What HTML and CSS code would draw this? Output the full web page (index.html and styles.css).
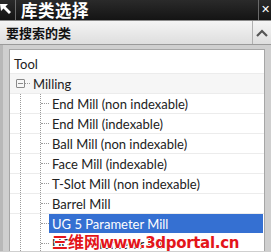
FILE: index.html
```html
<!DOCTYPE html>
<html lang="zh-CN">
<head>
  <meta charset="UTF-8" />
  <title>库类选择</title>
  <link rel="stylesheet" href="styles.css">
</head>
<body>
  <div class="titlebar">
    <span class="title-icon">
      <svg width="14" height="14" viewBox="0 0 14 14"><path d="M0 1 L8 1 L5.5 3.5 L11 9 L9 11 L3.5 5.5 L1 8 Z" fill="#fff"/></svg>
    </span>
    <span class="title">库类选择</span>
    <span class="close">✕</span>
  </div>

  <div class="section-head">
    <span class="section-label">要搜索的类</span>
    <span class="chevron">
      <svg width="12" height="8" viewBox="0 0 12 8"><path d="M1 7 L6 2 L11 7" fill="none" stroke="#555" stroke-width="2.2"/></svg>
    </span>
  </div>

  <div class="panel">
    <div class="tree">
      <div class="row root"><span class="label">Tool</span></div>
      <div class="row alt">
        <span class="expander"><span class="minus"></span></span>
        <span class="conn short"></span>
        <span class="label">Milling</span>
      </div>
      <div class="row"><span class="guide"></span><span class="guide wide"></span><span class="conn"></span><span class="label">End Mill (non indexable)</span></div>
      <div class="row"><span class="guide"></span><span class="guide wide"></span><span class="conn"></span><span class="label">End Mill (indexable)</span></div>
      <div class="row"><span class="guide"></span><span class="guide wide"></span><span class="conn"></span><span class="label">Ball Mill (non indexable)</span></div>
      <div class="row"><span class="guide"></span><span class="guide wide"></span><span class="conn"></span><span class="label">Face Mill (indexable)</span></div>
      <div class="row"><span class="guide"></span><span class="guide wide"></span><span class="conn"></span><span class="label">T-Slot Mill (non indexable)</span></div>
      <div class="row"><span class="guide"></span><span class="guide wide"></span><span class="conn"></span><span class="label">Barrel Mill</span></div>
      <div class="row selected"><span class="guide"></span><span class="guide wide"></span><span class="conn"></span><span class="label">UG 5 Parameter Mill</span></div>
      <div class="row"><span class="guide"></span><span class="guide wide"></span><span class="conn"></span><span class="label">UG 7 Parameter Mill</span></div>
    </div>
    <div class="watermark">三维网<span class="wm-url">www.3dportal.cn</span></div>
  </div>
</body>
</html>
```

FILE: styles.css
```css
body {
  margin: 0;
  width: 271px;
  height: 252px;
  overflow: hidden;
  background: #cfcfcf;
  font-family: "Lato", "Noto Sans", sans-serif;
}
.titlebar {
  height: 20px;
  display: flex;
  align-items: center;
  background: linear-gradient(#2a2a2a, #141414);
  color: #fff;
  border-bottom: 1px solid #8a8a8a;
}
.title-icon {
  width: 15px;
  height: 20px;
  display: flex;
  align-items: center;
  border-right: 1px solid #6a6a6a;
}
.title {
  margin-left: 5px;
  flex: 1;
  font-family: "Noto Sans CJK SC", sans-serif;
  font-size: 16.5px;
  font-weight: bold;
  letter-spacing: 0.5px;
  line-height: 20px;
}
.close {
  width: 10px;
  height: 20px;
  padding-left: 2px;
  border-left: 1px solid #6a6a6a;
  font-family: "DejaVu Sans", sans-serif;
  font-size: 11px;
  font-weight: bold;
  line-height: 20px;
}
.section-head {
  height: 23px;
  display: flex;
  align-items: center;
  background: linear-gradient(#f4f4f4, #dedede);
  border-bottom: 1px solid #9a9a9a;
}
.section-label {
  flex: 1;
  margin-left: 6px;
  font-family: "Noto Sans CJK SC", sans-serif;
  font-size: 13px;
  font-weight: bold;
  line-height: 16px;
  color: #111;
}
.chevron {
  width: 18px;
  height: 23px;
  display: flex;
  align-items: center;
  justify-content: center;
  border-left: 1px solid #b0b0b0;
}
.panel {
  position: relative;
  height: 202px;
  overflow: hidden;
  padding: 4px 6px 0 6px;
  border-left: 3px solid #b8b8b8;
}
.tree {
  background: #fff;
  border: 1px solid #a6a6a6;
  padding-top: 4px;
  height: 220px;
}
.row {
  height: 19px;
  display: flex;
  align-items: stretch;
  border-bottom: 1px solid #ececec;
  font-size: 13px;
  color: #222;
}
.row.alt {
  background: #f6f6f6;
}
.row.root .label {
  margin-left: 1px;
}
.guide {
  width: 10px;
  border-right: 1px dotted #9a9a9a;
}
.guide.wide {
  width: 19px;
}
.expander {
  width: 15px;
  display: flex;
  align-items: center;
  justify-content: flex-end;
}
.minus {
  width: 7px;
  height: 7px;
  border: 1px solid #8a8a8a;
  border-radius: 1px;
  background: linear-gradient(#8a8a8a, #8a8a8a) center / 5px 1px no-repeat;
}
.conn {
  width: 8px;
  align-self: center;
  border-top: 1px dotted #9a9a9a;
}
.conn.short {
  width: 5px;
}
.label {
  display: flex;
  align-items: center;
  padding: 0 3px;
  white-space: nowrap;
}
.row.selected {
  border-bottom-color: #fff;
}
.row.selected .label {
  flex: 1;
  margin-right: 1px;
  background: #3570d2;
  color: #fff;
}
.watermark {
  position: absolute;
  left: 49px;
  top: 187px;
  font-family: "Noto Sans CJK SC", sans-serif;
  font-size: 16px;
  font-weight: bold;
  line-height: 18px;
  color: #e3151a;
  text-shadow: 1px 0 #fff, -1px 0 #fff, 0 1px #fff, 0 -1px #fff;
}
.wm-url {
  font-family: "DejaVu Sans", sans-serif;
  font-size: 15px;
  letter-spacing: -0.3px;
}
```
